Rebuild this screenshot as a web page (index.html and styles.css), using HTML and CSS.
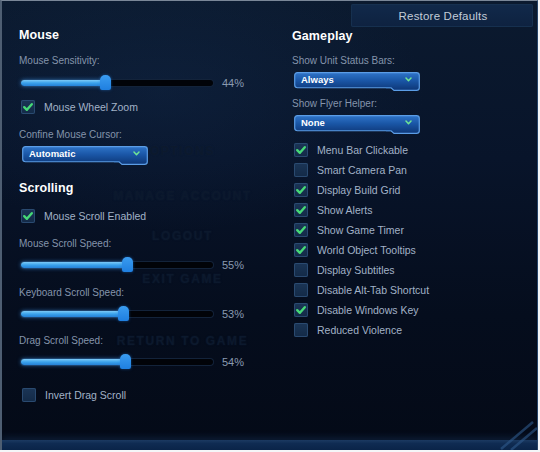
FILE: index.html
```html
<!DOCTYPE html>
<html lang="en">
<head>
<meta charset="utf-8">
<title>Options</title>
<link rel="stylesheet" href="styles.css">
</head>
<body>
<div class="window">
  <!-- game menu showing through the translucent options panel -->
  <div class="backdrop" aria-hidden="true">
    <span class="ghost g-options">OPTIONS</span>
    <span class="ghost g-account">MANAGE ACCOUNT</span>
    <span class="ghost g-logout">LOGOUT</span>
    <span class="ghost g-exit">EXIT GAME</span>
    <span class="ghost g-return">RETURN TO GAME</span>
  </div>

  <header class="topbar">
    <button class="restore">Restore Defaults</button>
  </header>

  <div class="columns">
    <section class="col col-left">
      <h2 class="heading">Mouse</h2>

      <div class="label l-sens">Mouse Sensitivity:</div>
      <div class="slider s-first">
        <div class="track"><div class="fill" style="width:44%"></div><span class="thumb" style="left:44%"></span></div>
        <span class="pct">44%</span>
      </div>

      <label class="check c-wheel"><span class="box on"><svg viewBox="0 0 14 14"><path d="M3.2 7.2 L5.9 9.8 L10.8 4.2"/></svg></span>Mouse Wheel Zoom</label>

      <div class="label l-confine">Confine Mouse Cursor:</div>
      <div class="select s-confine">
        <svg class="frame" viewBox="0 0 126 20" preserveAspectRatio="none"><use href="#dd"/></svg>
        <span class="value">Automatic</span>
        <svg class="chev" viewBox="0 0 8 6"><path d="M1 1.2 L4 4.4 L7 1.2"/></svg>
      </div>

      <h2 class="heading h-scroll">Scrolling</h2>
      <label class="check c-scroll"><span class="box on"><svg viewBox="0 0 14 14"><path d="M3.2 7.2 L5.9 9.8 L10.8 4.2"/></svg></span>Mouse Scroll Enabled</label>

      <div class="label l-mouse-speed">Mouse Scroll Speed:</div>
      <div class="slider s-speed">
        <div class="track"><div class="fill" style="width:55%"></div><span class="thumb" style="left:55%"></span></div>
        <span class="pct">55%</span>
      </div>

      <div class="label l-key-speed">Keyboard Scroll Speed:</div>
      <div class="slider s-speed">
        <div class="track"><div class="fill" style="width:53%"></div><span class="thumb" style="left:53%"></span></div>
        <span class="pct">53%</span>
      </div>

      <div class="label l-drag-speed">Drag Scroll Speed:</div>
      <div class="slider s-speed">
        <div class="track"><div class="fill" style="width:54%"></div><span class="thumb" style="left:54%"></span></div>
        <span class="pct">54%</span>
      </div>

      <label class="check c-invert"><span class="box"></span>Invert Drag Scroll</label>
    </section>

    <section class="col col-right">
      <h2 class="heading">Gameplay</h2>

      <div class="label l-unit">Show Unit Status Bars:</div>
      <div class="select s-right">
        <svg class="frame" viewBox="0 0 126 20" preserveAspectRatio="none"><use href="#dd"/></svg>
        <span class="value">Always</span>
        <svg class="chev" viewBox="0 0 8 6"><path d="M1 1.2 L4 4.4 L7 1.2"/></svg>
      </div>

      <div class="label l-flyer">Show Flyer Helper:</div>
      <div class="select s-right">
        <svg class="frame" viewBox="0 0 126 20" preserveAspectRatio="none"><use href="#dd"/></svg>
        <span class="value">None</span>
        <svg class="chev" viewBox="0 0 8 6"><path d="M1 1.2 L4 4.4 L7 1.2"/></svg>
      </div>

      <ul class="checklist">
        <li><label class="check"><span class="box on"><svg viewBox="0 0 14 14"><path d="M3.2 7.2 L5.9 9.8 L10.8 4.2"/></svg></span>Menu Bar Clickable</label></li>
        <li><label class="check"><span class="box"></span>Smart Camera Pan</label></li>
        <li><label class="check"><span class="box on"><svg viewBox="0 0 14 14"><path d="M3.2 7.2 L5.9 9.8 L10.8 4.2"/></svg></span>Display Build Grid</label></li>
        <li><label class="check"><span class="box on"><svg viewBox="0 0 14 14"><path d="M3.2 7.2 L5.9 9.8 L10.8 4.2"/></svg></span>Show Alerts</label></li>
        <li><label class="check"><span class="box on"><svg viewBox="0 0 14 14"><path d="M3.2 7.2 L5.9 9.8 L10.8 4.2"/></svg></span>Show Game Timer</label></li>
        <li><label class="check"><span class="box on"><svg viewBox="0 0 14 14"><path d="M3.2 7.2 L5.9 9.8 L10.8 4.2"/></svg></span>World Object Tooltips</label></li>
        <li><label class="check"><span class="box"></span>Display Subtitles</label></li>
        <li><label class="check"><span class="box"></span>Disable Alt-Tab Shortcut</label></li>
        <li><label class="check"><span class="box on"><svg viewBox="0 0 14 14"><path d="M3.2 7.2 L5.9 9.8 L10.8 4.2"/></svg></span>Disable Windows Key</label></li>
        <li><label class="check"><span class="box"></span>Reduced Violence</label></li>
      </ul>
    </section>
  </div>

  <div class="bottom-bar">
    <svg class="corner" viewBox="0 0 40 34"><path d="M4 33 L36 6" /><path d="M14 34 L40 12" /></svg>
  </div>

  <!-- shared dropdown outline: body plus the stepped tab on the lower right -->
  <svg width="0" height="0" class="defs">
    <defs>
      <linearGradient id="ddfill" x1="0" y1="0" x2="0" y2="1">
        <stop offset="0" stop-color="#2f74c8"/>
        <stop offset="0.45" stop-color="#1a56a6"/>
        <stop offset="1" stop-color="#0d3676"/>
      </linearGradient>
      <g id="dd">
        <path d="M3.5 0.7 H122.5 Q125.3 0.7 125.3 3.5 V16.5 Q125.3 19.3 122.5 19.3 H100 L97 16.6 H3.5 Q0.7 16.6 0.7 13.8 V3.5 Q0.7 0.7 3.5 0.7 Z" fill="url(#ddfill)" stroke="#5b9de6" stroke-width="1.2"/>
        <path d="M97 16.6 H92" stroke="#3f7fcc" stroke-width="1"/>
      </g>
    </defs>
  </svg>
</div>
</body>
</html>
```

FILE: styles.css
```css
* { box-sizing: border-box; }

html, body {
  margin: 0;
  padding: 0;
  background: #f4f6f8;
}

body {
  font-family: "Liberation Sans", Arial, sans-serif;
  width: 540px;
  height: 452px;
  overflow: hidden;
}

.window {
  position: relative;
  width: 538px;
  height: 450px;
  border-top: 1px solid #7a8798;
  border-left: 2px solid #4e5e72;
  border-right: 1px solid #27456a;
  background:
    radial-gradient(ellipse 70% 45% at 30% 20%, rgba(20, 45, 80, 0.35), rgba(0, 0, 0, 0) 70%),
    linear-gradient(180deg, #0b1a2f 0%, #08142a 35%, #050d1d 70%, #040a17 100%);
  overflow: hidden;
  display: flex;
  flex-direction: column;
}

/* faint game menu behind the panel */
.backdrop {
  position: absolute;
  left: 98px;
  top: 143px;
  width: 165px;
  display: flex;
  flex-direction: column;
  align-items: center;
  pointer-events: none;
}

.ghost {
  font-size: 12px;
  letter-spacing: 1.6px;
  font-weight: bold;
  color: #0c192d;
  text-shadow: 0 0 2px rgba(20, 40, 70, 0.3);
}
.g-account { margin-top: 31px; }
.g-logout { margin-top: 26px; }
.g-exit { margin-top: 29px; }
.g-return { margin-top: 48px; }

.topbar {
  position: relative;
  display: flex;
  justify-content: flex-end;
  padding: 3px 4px 0 0;
  height: 26px;
}

.restore {
  width: 182px;
  height: 23px;
  border: 0;
  border-radius: 2px;
  background: linear-gradient(180deg, #11294a 0%, #0e2240 100%);
  box-shadow: inset 0 0 0 1px #16304f;
  color: #c3ccd8;
  font-family: "Liberation Sans", Arial, sans-serif;
  font-size: 11.5px;
  letter-spacing: 0.2px;
  padding: 0 0 0 2px;
}

.columns {
  position: relative;
  display: grid;
  grid-template-columns: 271px 1fr;
  flex: 1;
}

.col-left { padding-left: 17px; }
.col-right { padding-left: 19px; padding-top: 1px; }

.heading {
  margin: 0;
  color: #ffffff;
  font-size: 12.5px;
  line-height: 16px;
  font-weight: bold;
  letter-spacing: 0.1px;
}

.label {
  color: #8494ab;
  font-size: 10px;
  line-height: 14px;
}

.l-sens { margin-top: 11px; }
.l-confine { margin-top: 13px; }
.l-mouse-speed { margin-top: 13px; }
.l-key-speed { margin-top: 13px; }
.l-drag-speed { margin-top: 12px; }
.l-unit { margin-top: 10px; }
.l-flyer { margin-top: 6px; }

.h-scroll { margin-top: 15px; }

/* sliders */
.slider {
  display: flex;
  align-items: center;
  height: 16px;
  padding-left: 2px;
}
.s-first { margin-top: 7px; }
.s-speed { margin-top: 6px; }

.track {
  position: relative;
  width: 192px;
  height: 6px;
  border-radius: 3px;
  background: #010308;
  box-shadow: 0 0 0 1px #13233a;
}

.fill {
  height: 100%;
  border-radius: 3px 0 0 3px;
  background: linear-gradient(180deg, #7ccaf7 0%, #3aa2ec 50%, #2580d6 100%);
  box-shadow: 0 0 4px rgba(60, 150, 235, 0.7);
}

.thumb {
  position: absolute;
  top: -5px;
  width: 11px;
  height: 15px;
  margin-left: -5px;
  border-radius: 5px 5px 2px 2px;
  background: linear-gradient(180deg, #3a9cf0 0%, #1f7fe0 100%);
  box-shadow: 0 0 3px rgba(40, 130, 230, 0.5);
}

.pct {
  margin-left: 9px;
  color: #8a9ab0;
  font-size: 11px;
}

/* checkboxes */
.check {
  display: flex;
  align-items: center;
  height: 16px;
  color: #a2b2c7;
  font-size: 10.5px;
  gap: 9px;
  padding-left: 2px;
}

.c-wheel { margin-top: 8px; }
.c-scroll { margin-top: 12px; }
.c-invert { margin-top: 17px; padding-left: 3px; }

.box {
  flex: none;
  width: 14px;
  height: 14px;
  border-radius: 2px;
  background: linear-gradient(180deg, #1b3556 0%, #132a47 100%);
  box-shadow: inset 0 0 0 1px #2a4a70;
  display: flex;
}

.box svg {
  width: 14px;
  height: 14px;
}

.box path {
  fill: none;
  stroke: #46d977;
  stroke-width: 2.4;
  stroke-linecap: round;
  stroke-linejoin: round;
}

/* dropdowns */
.select {
  position: relative;
  width: 126px;
  height: 19px;
  display: flex;
  align-items: flex-start;
}
.s-confine { margin-top: 4px; margin-left: 3px; }
.s-right { margin-top: 4px; margin-left: 2px; }

.select .frame {
  position: absolute;
  inset: 0;
  width: 126px;
  height: 19px;
}

.select .value {
  position: relative;
  padding: 2px 0 0 7px;
  color: #ffffff;
  font-size: 9.5px;
  line-height: 12px;
  font-weight: bold;
}

.select .chev {
  position: absolute;
  right: 8px;
  top: 5px;
  width: 7px;
  height: 5px;
}

.chev path {
  fill: none;
  stroke: #6ee595;
  stroke-width: 1.8;
  stroke-linecap: round;
  stroke-linejoin: round;
}

.checklist {
  list-style: none;
  margin: 6px 0 0;
  padding: 0;
}

.checklist li {
  height: 20px;
  display: flex;
  align-items: center;
}

.bottom-bar {
  position: absolute;
  left: 0;
  right: 0;
  bottom: 0;
  height: 10px;
  background: linear-gradient(180deg, #1b3a62 0%, #0f2b52 35%, #0a2448 100%);
  box-shadow: 0 -3px 6px rgba(30, 70, 120, 0.3);
}

.corner {
  position: absolute;
  right: 0;
  bottom: 0;
  width: 40px;
  height: 34px;
  opacity: 0.6;
}

.corner path {
  fill: none;
  stroke: #2f5a8c;
  stroke-width: 2.5;
}

.defs { position: absolute; }
```
